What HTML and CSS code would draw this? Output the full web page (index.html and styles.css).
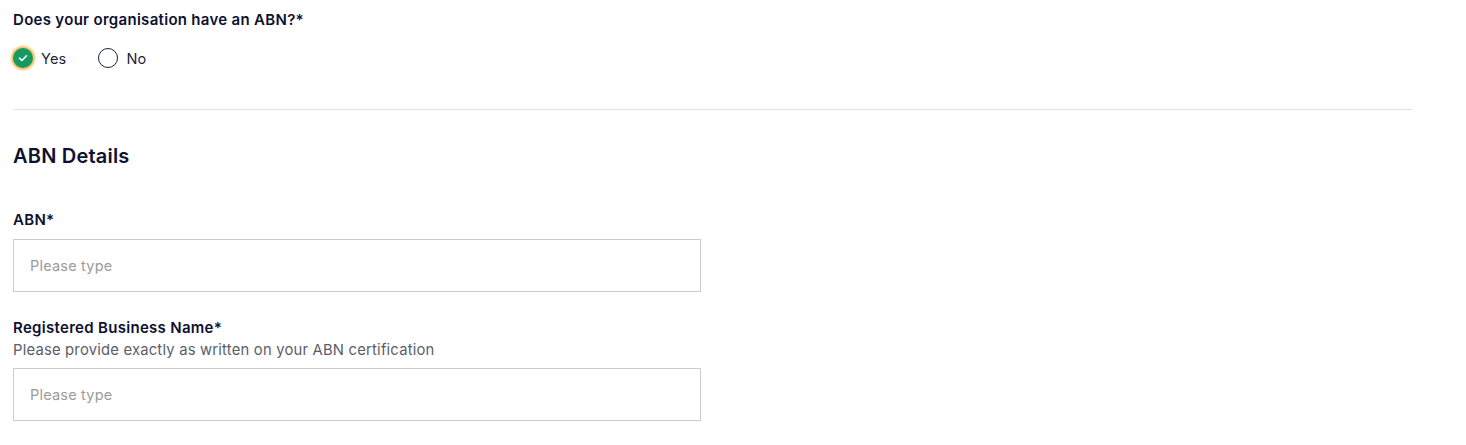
FILE: index.html
```html
<!DOCTYPE html>
<html lang="en">
<head>
<meta charset="utf-8">
<link rel="stylesheet" href="styles.css">
</head>
<body>
<main class="form">
  <section class="question">
    <div class="label">Does your organisation have an ABN?*</div>
    <div class="radios">
      <label class="radio">
        <span class="dot checked">
          <svg viewBox="0 0 20 20" width="20" height="20"><path d="M6.5 10.2 L8.9 12.5 L13.5 7.8" fill="none" stroke="#fff" stroke-width="1.6" stroke-linecap="round" stroke-linejoin="round"/></svg>
        </span>
        <span class="radio-text">Yes</span>
      </label>
      <label class="radio">
        <span class="dot"></span>
        <span class="radio-text">No</span>
      </label>
    </div>
  </section>
  <hr class="divider">
  <h2 class="section-title">ABN Details</h2>
  <div class="field">
    <div class="label">ABN*</div>
    <div class="input"><span class="placeholder">Please type</span></div>
  </div>
  <div class="field field-2">
    <div class="label">Registered Business Name*</div>
    <div class="hint">Please provide exactly as written on your ABN certification</div>
    <div class="input"><span class="placeholder">Please type</span></div>
  </div>
</main>
</body>
</html>
```
FILE: styles.css
```css
html, body {
  margin: 0;
  padding: 0;
  background: #fff;
}
body {
  font-family: "Inter", "Liberation Sans", sans-serif;
  color: #0e1130;
}
.form {
  padding: 10px 0 0 13px;
  width: 1399px;
}
.label {
  font-size: 15px;
  font-weight: 600;
  line-height: 20px;
  letter-spacing: 0.3px;
  color: #0e1130;
}
.radios {
  display: flex;
  gap: 32px;
  margin-top: 17px;
  height: 22px;
  align-items: center;
}
.radio {
  display: flex;
  align-items: center;
  gap: 8px;
}
.dot {
  width: 20px;
  height: 20px;
  box-sizing: border-box;
  border: 1.5px solid #1c1f3a;
  border-radius: 50%;
  display: flex;
  align-items: center;
  justify-content: center;
}
.dot.checked {
  border: none;
  background: #159a62;
  box-shadow: 0 0 2px 2px rgba(245, 170, 40, 0.75);
}
.dot svg { display: block; }
.radio-text {
  font-size: 14.5px;
  letter-spacing: 0.2px;
  color: #1c1f3a;
}
.divider {
  border: none;
  border-top: 1px solid #e2e2e2;
  margin: 40px 0 0 0;
}
.section-title {
  font-size: 20px;
  font-weight: 600;
  margin: 34px 0 0 0;
  line-height: 24px;
  letter-spacing: 0.2px;
}
.field {
  margin-top: 42px;
}
.field-2 {
  margin-top: 26px;
}
.hint {
  font-size: 14.8px;
  color: #5b5d6a;
  line-height: 22px;
  letter-spacing: 0.2px;
  margin-top: 1px;
}
.input {
  margin-top: 9px;
  width: 688px;
  height: 53px;
  box-sizing: border-box;
  border: 1px solid #cccccc;
  display: flex;
  align-items: center;
  padding-left: 16px;
}
.field-2 .input { margin-top: 7px; }
.placeholder {
  font-size: 14.5px;
  letter-spacing: 0.2px;
  color: #9b9b9b;
}
```
